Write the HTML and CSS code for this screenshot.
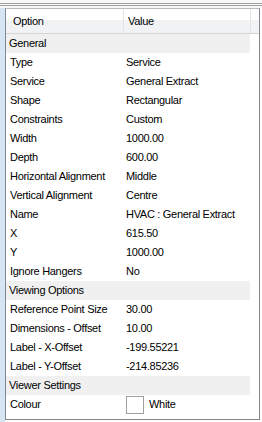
FILE: index.html
```html
<!DOCTYPE html>
<html lang="en">
<head>
  <meta charset="UTF-8">
  <title>Properties</title>
  <link rel="stylesheet" href="styles.css">
</head>
<body>
  <div class="splitter"></div>
  <div class="main">
    <div class="stripe"></div>
    <div class="panel">
      <div class="header">
        <div class="col-opt">Option</div>
        <div class="col-val">Value</div>
        <div class="filler"></div>
      </div>
      <div class="rows">
        <div class="group">General</div>
        <div class="row"><div class="opt">Type</div><div class="val">Service</div></div>
        <div class="row"><div class="opt">Service</div><div class="val">General Extract</div></div>
        <div class="row"><div class="opt">Shape</div><div class="val">Rectangular</div></div>
        <div class="row"><div class="opt">Constraints</div><div class="val">Custom</div></div>
        <div class="row"><div class="opt">Width</div><div class="val">1000.00</div></div>
        <div class="row"><div class="opt">Depth</div><div class="val">600.00</div></div>
        <div class="row"><div class="opt">Horizontal Alignment</div><div class="val">Middle</div></div>
        <div class="row"><div class="opt">Vertical Alignment</div><div class="val">Centre</div></div>
        <div class="row"><div class="opt">Name</div><div class="val">HVAC : General Extract</div></div>
        <div class="row"><div class="opt">X</div><div class="val">615.50</div></div>
        <div class="row"><div class="opt">Y</div><div class="val">1000.00</div></div>
        <div class="row"><div class="opt">Ignore Hangers</div><div class="val">No</div></div>
        <div class="group">Viewing Options</div>
        <div class="row"><div class="opt">Reference Point Size</div><div class="val">30.00</div></div>
        <div class="row"><div class="opt">Dimensions - Offset</div><div class="val">10.00</div></div>
        <div class="row"><div class="opt">Label - X-Offset</div><div class="val">-199.55221</div></div>
        <div class="row"><div class="opt">Label - Y-Offset</div><div class="val">-214.85236</div></div>
        <div class="group">Viewer Settings</div>
        <div class="row"><div class="opt">Colour</div><div class="val"><span class="swatch"></span>White</div></div>
      </div>
    </div>
  </div>
</body>
</html>
```
FILE: styles.css
```css
body {
  margin: 0;
  width: 262px;
  height: 422px;
  background: #fff;
  font-family: "Liberation Sans", Arial, sans-serif;
  font-size: 11px;
  letter-spacing: -0.3px;
  color: #000;
  overflow: hidden;
}
.splitter {
  height: 8px;
  box-sizing: border-box;
  padding-top: 3px;
  background: #f7f7f7;
}
.splitter::before {
  content: "";
  display: block;
  height: 1px;
  border-top: 1px solid #a0a0a0;
  border-bottom: 1px solid #a0a0a0;
  background: #f7f7f7;
}
.main {
  display: flex;
  height: 414px;
}
.stripe {
  width: 5px;
  background: #d6e4f3;
}
.panel {
  width: 253px;
  height: 410px;
  border: 1px solid #828790;
  border-top-color: #b8bcc2;
  background: #fff;
}
.header {
  display: flex;
  height: 24px;
  border-bottom: 1px solid #d5d5d5;
  background: linear-gradient(#fff 0, #fff 11px, #f1f2f4 11px, #f1f2f4 100%);
  line-height: 24px;
}
.col-opt {
  width: 110px;
  padding-left: 7px;
  border-right: 1px solid #e3e4e6;
}
.col-val {
  width: 122px;
  padding-left: 4px;
  border-right: 1px solid #e3e4e6;
}
.filler {
  flex: 1;
}
.rows {
  width: 244px;
}
.group {
  height: 19px;
  line-height: 19px;
  padding-left: 3px;
  background: #f0f0f0;
}
.row {
  display: flex;
  height: 19px;
  line-height: 19px;
}
.opt {
  width: 116px;
  padding-left: 4px;
  white-space: nowrap;
}
.val {
  display: flex;
  align-items: center;
  gap: 5px;
  padding-left: 0;
  white-space: nowrap;
}
.swatch {
  width: 16px;
  height: 16px;
  border: 1px solid #a0a0a0;
  background: #fff;
}
```
